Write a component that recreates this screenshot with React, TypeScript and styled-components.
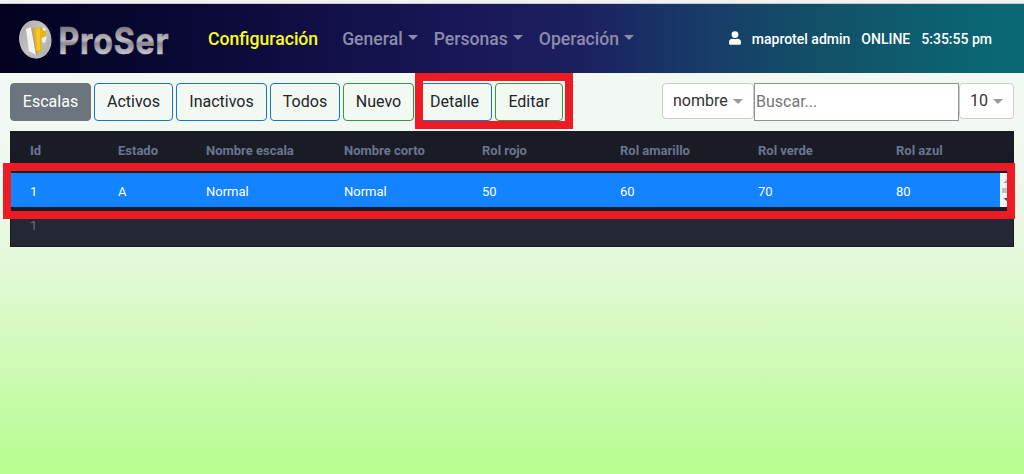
import React from "react";
import styled, { createGlobalStyle } from "styled-components";

const GlobalStyle = createGlobalStyle`
  * { box-sizing: border-box; }
  body { margin: 0; font-family: Roboto, "Liberation Sans", sans-serif; color: #212529; }
`;

const Page = styled.div`
  position: relative;
  height: 474px;
  overflow: hidden;
  background: linear-gradient(180deg, #f3f8f3 0%, #f2f8f2 26%, #e8f8df 52%, #b8fc92 98%, #b8fc92 100%);
`;

const TopEdge = styled.div`
  height: 4px;
  background: #f1f1f1;
  border-bottom: 1px solid #c9cbc9;
`;

const Navbar = styled.header`
  display: flex;
  align-items: center;
  height: 69px;
  padding: 0 32px 0 18px;
  background: linear-gradient(90deg, #02021f 0%, #0b0938 20%, #1a1859 47%, #1c205f 57%, #183868 67%, #125068 80%, #0a6673 96%, #096873 100%);
`;

const Brand = styled.svg`
  display: block;
  flex: none;
  width: 154px;
  height: 58px;
  overflow: visible;
`;

const NavLinks = styled.nav`
  display: flex;
  align-items: center;
  gap: 16px;
  margin-left: 36px;
  padding-top: 2px;
`;

const NavLink = styled.a<{ $active?: boolean }>`
  display: flex;
  align-items: center;
  margin-right: ${(p) => (p.$active ? "8px" : "0")};
  font-size: 17.6px;
  font-weight: 500;
  line-height: 27px;
  white-space: nowrap;
  color: ${(p) => (p.$active ? "#fdfd1c" : "#8c8cac")};
`;

const Caret = styled.span<{ $size: number; $gap: number }>`
  width: 0;
  height: 0;
  margin-left: ${(p) => p.$gap}px;
  margin-top: -4px;
  border: ${(p) => p.$size}px solid transparent;
  border-top-color: currentColor;
  border-bottom: 0;
`;

const Session = styled.div`
  display: flex;
  align-items: center;
  margin-left: auto;
  gap: 11px;
  font-size: 14px;
  font-weight: 500;
  line-height: 20px;
  color: #fff;
  white-space: nowrap;
`;

const UserIcon = styled.svg`
  width: 12px;
  height: 14px;
  margin-top: -1px;
  fill: #fff;
`;

const Toolbar = styled.div`
  display: flex;
  align-items: flex-start;
  height: 58px;
  padding: 10px 10px 0;
`;

const ButtonRow = styled.div`
  display: flex;
  gap: 3px;
`;

const toneColors = { solid: "#6c757d", blue: "#1874c8", green: "#2f9a49" };

const ToolButton = styled.button<{ $tone: keyof typeof toneColors; $width: number }>`
  width: ${(p) => p.$width}px;
  height: 38px;
  padding: 0;
  border: 1px solid ${(p) => toneColors[p.$tone]};
  border-radius: 4px;
  background: ${(p) => (p.$tone === "solid" ? toneColors.solid : "transparent")};
  color: ${(p) => (p.$tone === "solid" ? "#fff" : "#212529")};
  font: 400 16px/24px Roboto, "Liberation Sans", sans-serif;
  white-space: nowrap;
`;

const SearchGroup = styled.div`
  display: flex;
  align-items: flex-start;
  margin-left: auto;
`;

const Select = styled.div<{ $width: number }>`
  display: flex;
  align-items: center;
  width: ${(p) => p.$width}px;
  height: 36px;
  padding-left: 10px;
  border: 1px solid #ccc;
  border-radius: 4px;
  background: #fff;
  color: #333;
  font-size: 16px;
  line-height: 34px;

  ${Caret} {
    color: #999;
    margin-top: 1px;
  }
`;

const SearchInput = styled.input`
  width: 205px;
  height: 38px;
  padding: 0 1px 2px;
  border: 1px solid #929292;
  border-radius: 0;
  background: #fff;
  font: 400 16px Roboto, "Liberation Sans", sans-serif;

  &::placeholder { color: #757575; opacity: 1; }
`;

const Table = styled.section`
  margin: 0 10px;
  height: 116px;
  border: 1px solid #171b25;
  background: #242836;
`;

const columns = "88px 88px 138px 138px 138px 138px 138px 1fr";

const HeaderRow = styled.div`
  display: grid;
  grid-template-columns: ${columns};
  height: 41px;
  padding: 9px 0 0 19px;
  background: #191c25;
  color: #6b7590;
  font-size: 13px;
  font-weight: 700;
  line-height: 20px;
`;

const BodyScroll = styled.div`
  display: flex;
  height: 38px;
  padding-bottom: 4px;
  background: #191c25;
`;

const BodyRow = styled.div`
  display: grid;
  grid-template-columns: ${columns};
  flex: 1;
  padding-left: 19px;
  background: #1383ff;
  color: #fff;
  font-size: 13px;
  line-height: 20px;
  padding-top: 9px;
`;

const Scrollbar = styled.svg`
  display: block;
  flex: none;
  width: 13px;
  height: 34px;
`;

const FooterRow = styled.div`
  padding: 5px 0 0 19px;
  color: #6b7088;
  font-size: 13px;
  line-height: 20px;
`;

const Highlight = styled.div<{ $x: number; $y: number; $w: number; $h: number }>`
  position: absolute;
  left: ${(p) => p.$x}px;
  top: ${(p) => p.$y}px;
  width: ${(p) => p.$w}px;
  height: ${(p) => p.$h}px;
  border: 8px solid #ed1c24;
  pointer-events: none;
`;

const buttons: { label: string; tone: keyof typeof toneColors; width: number }[] = [
  { label: "Escalas", tone: "solid", width: 81 },
  { label: "Activos", tone: "blue", width: 79 },
  { label: "Inactivos", tone: "blue", width: 91 },
  { label: "Todos", tone: "blue", width: 70 },
  { label: "Nuevo", tone: "green", width: 71 },
  { label: "Detalle", tone: "blue", width: 75 },
  { label: "Editar", tone: "green", width: 68 },
];

const headers = ["Id", "Estado", "Nombre escala", "Nombre corto", "Rol rojo", "Rol amarillo", "Rol verde", "Rol azul"];
const record = ["1", "A", "Normal", "Normal", "50", "60", "70", "80"];

function Logo() {
  return (
    <Brand viewBox="0 -8 154 58" role="img" aria-label="ProSer">
      <defs>
        <linearGradient id="metal" gradientUnits="userSpaceOnUse" x1="0" y1="-24" x2="0" y2="0">
          <stop offset="0" stopColor="#77737f" />
          <stop offset="0.5" stopColor="#bdbbc0" />
          <stop offset="0.64" stopColor="#8b8891" />
          <stop offset="1" stopColor="#c6c4c9" />
        </linearGradient>
        <linearGradient id="disc" x1="0" y1="0" x2="1" y2="1">
          <stop offset="0" stopColor="#a5a5a5" />
          <stop offset="0.5" stopColor="#c4c4c3" />
          <stop offset="1" stopColor="#aaa9a5" />
        </linearGradient>
      </defs>
      <ellipse cx="17.3" cy="21.5" rx="15.6" ry="18.6" fill="url(#disc)" stroke="#c8c8c8" strokeWidth="1" transform="rotate(-8 17.3 21.5)" />
      <path d="M8 11 13 9 18 37 11 33Z" fill="#f4f4f4" />
      <path d="M13 9 16 11 20 36 18 37Z" fill="#a3a3a1" />
      <path d="M15 10 24 9 25 13 28 13 28 18 23 20 24 33 18 34Z" fill="#e9b411" />
      <path d="M18 11 22 10 22 32 19 33Z" fill="#f5c72b" />
      <path d="M25 9 28 11 27 13 25 12Z M24 20 29 18 27 25 24 24Z" fill="#eeeeec" />
      <text
        transform="translate(40.5 35.5) scale(1 1.14)"
        fontFamily="Inter, Roboto, sans-serif"
        fontSize="32"
        fontWeight="700"
        textLength="110"
        lengthAdjust="spacing"
        fill="url(#metal)"
        stroke="url(#metal)"
        strokeWidth="0.6"
      >
        ProSer
      </text>
    </Brand>
  );
}

export default function App() {
  return (
    <>
      <GlobalStyle />
      <Page>
        <TopEdge />
        <Navbar>
          <Logo />
          <NavLinks>
            <NavLink $active>Configuración</NavLink>
            {["General", "Personas", "Operación"].map((label) => (
              <NavLink key={label}>
                {label}
                <Caret $size={5} $gap={5} />
              </NavLink>
            ))}
          </NavLinks>
          <Session>
            <UserIcon viewBox="0 0 448 512">
              <path d="M224 256a128 128 0 1 0 0-256 128 128 0 0 0 0 256zm90 32h-17a174 174 0 0 1-146 0h-17A134 134 0 0 0 0 422v42a48 48 0 0 0 48 48h352a48 48 0 0 0 48-48v-42a134 134 0 0 0-134-134z" />
            </UserIcon>
            <span>maprotel admin</span>
            <span>ONLINE</span>
            <span>5:35:55 pm</span>
          </Session>
        </Navbar>
        <Toolbar>
          <ButtonRow>
            {buttons.map((b) => (
              <ToolButton key={b.label} $tone={b.tone} $width={b.width}>{b.label}</ToolButton>
            ))}
          </ButtonRow>
          <SearchGroup>
            <Select $width={92}>nombre<Caret $size={5} $gap={5} /></Select>
            <SearchInput placeholder="Buscar..." />
            <Select $width={55}>10<Caret $size={5} $gap={5} /></Select>
          </SearchGroup>
        </Toolbar>
        <Table>
          <HeaderRow>{headers.map((h) => <span key={h}>{h}</span>)}</HeaderRow>
          <BodyScroll>
            <BodyRow>{record.map((value, i) => <span key={headers[i]}>{value}</span>)}</BodyRow>
            <Scrollbar viewBox="0 0 13 34">
              <rect width="13" height="34" fill="#f4f2f2" />
              <path d="M3.5 10 6.5 7 9.5 10Z" fill="#a5a3a3" />
              <rect x="2" y="15" width="9" height="5" fill="#c1c1c1" />
              <path d="M3.5 25 6.5 28 9.5 25Z" fill="#505050" />
            </Scrollbar>
          </BodyScroll>
          <FooterRow>1</FooterRow>
        </Table>
        <Highlight $x={415} $y={73} $w={158} $h={56} />
        <Highlight $x={3} $y={163} $w={1012} $h={56} />
      </Page>
    </>
  );
}
